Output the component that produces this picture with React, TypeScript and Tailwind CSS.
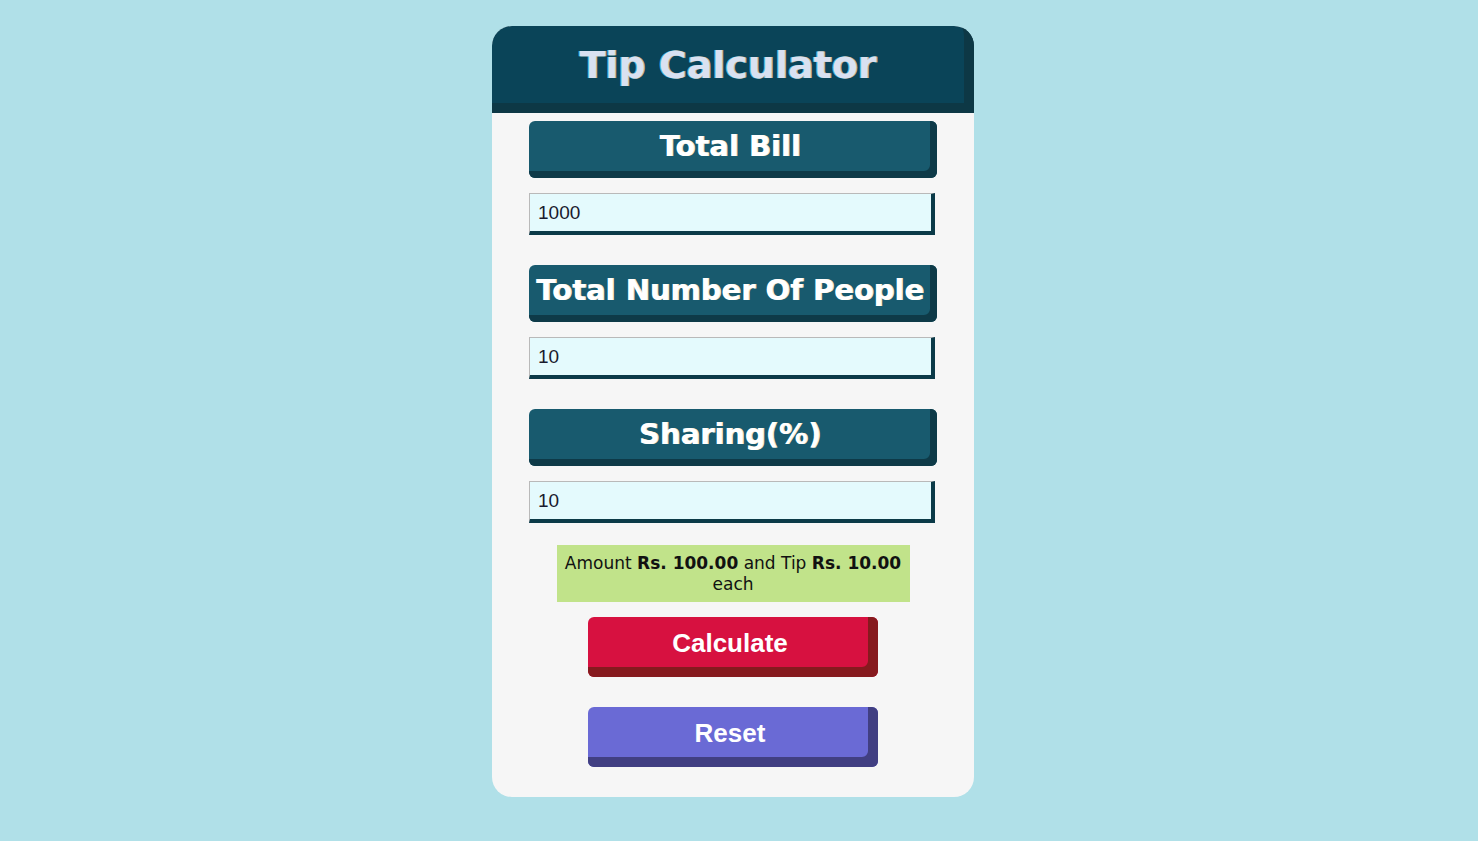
import { FC, useState } from "react";

const labelCls =
  "w-[408px] h-[57px] flex items-center justify-center whitespace-nowrap pr-[6px] pb-[5px] rounded-[6px] bg-[#185a6e] shadow-[inset_-7px_-7px_0_#0e3a48] text-white text-[29px] font-bold font-['DejaVu_Sans',sans-serif] [text-shadow:1px_0_0_#f5e6c8]";

const inputCls =
  "w-[406px] h-[42px] bg-[#e4fafd] border border-[#b9b9b9] border-r-4 border-b-4 border-r-[#0b3a48] border-b-[#0b3a48] pl-[8px] text-[19px] text-[#1a1a2e] font-['Liberation_Sans',Arial,sans-serif] outline-none";

const App: FC = () => {
  const [bill, setBill] = useState("1000");
  const [people, setPeople] = useState("10");
  const [share, setShare] = useState("10");

  return (
    <div className="min-h-[841px] w-full bg-[#b0e0e8] flex justify-center pt-[26px] pr-[12px]">
      <div className="w-[482px] h-[771px] bg-[#f6f6f6] rounded-[20px] flex flex-col items-center">
        <div className="w-full h-[87px] rounded-t-[20px] bg-[#0a4458] shadow-[inset_-10px_-10px_0_#0d3845] flex items-center justify-center pb-[8px] pr-[10px]">
          <h1 className="text-[38px] font-bold text-[#d9e1f1] font-['DejaVu_Sans',sans-serif] [text-shadow:1px_0_0_#c9b08a,-1px_0_0_#4fb3d0]">
            Tip Calculator
          </h1>
        </div>

        <div className="flex flex-col items-start mt-[8px]">
          <div className={labelCls}>Total Bill</div>
          <input className={`${inputCls} mt-[15px]`} value={bill} onChange={(e) => setBill(e.target.value)} />

          <div className={`${labelCls} mt-[30px]`}>Total Number Of People</div>
          <input className={`${inputCls} mt-[15px]`} value={people} onChange={(e) => setPeople(e.target.value)} />

          <div className={`${labelCls} mt-[30px]`}>Sharing(%)</div>
          <input className={`${inputCls} mt-[15px]`} value={share} onChange={(e) => setShare(e.target.value)} />
        </div>

        <div className="mt-[22px] w-[353px] h-[57px] bg-[#c1e38a] flex items-center justify-center text-center text-[17px] leading-[21px] text-[#111] font-['DejaVu_Sans',sans-serif]">
          <p>
            Amount <b>Rs. 100.00</b> and Tip <b>Rs. 10.00</b> each
          </p>
        </div>

        <button className="mt-[15px] w-[290px] h-[60px] rounded-[6px] bg-[#d71140] shadow-[inset_-10px_-10px_0_#861a1e] text-white text-[26px] font-bold font-['Liberation_Sans',Arial,sans-serif] pb-[8px] pr-[6px]">
          Calculate
        </button>

        <button className="mt-[30px] w-[290px] h-[60px] rounded-[6px] bg-[#6a6ad5] shadow-[inset_-10px_-10px_0_#413f82] text-white text-[26px] font-bold font-['Liberation_Sans',Arial,sans-serif] pb-[8px] pr-[6px]">
          Reset
        </button>
      </div>
    </div>
  );
};

export default App;
